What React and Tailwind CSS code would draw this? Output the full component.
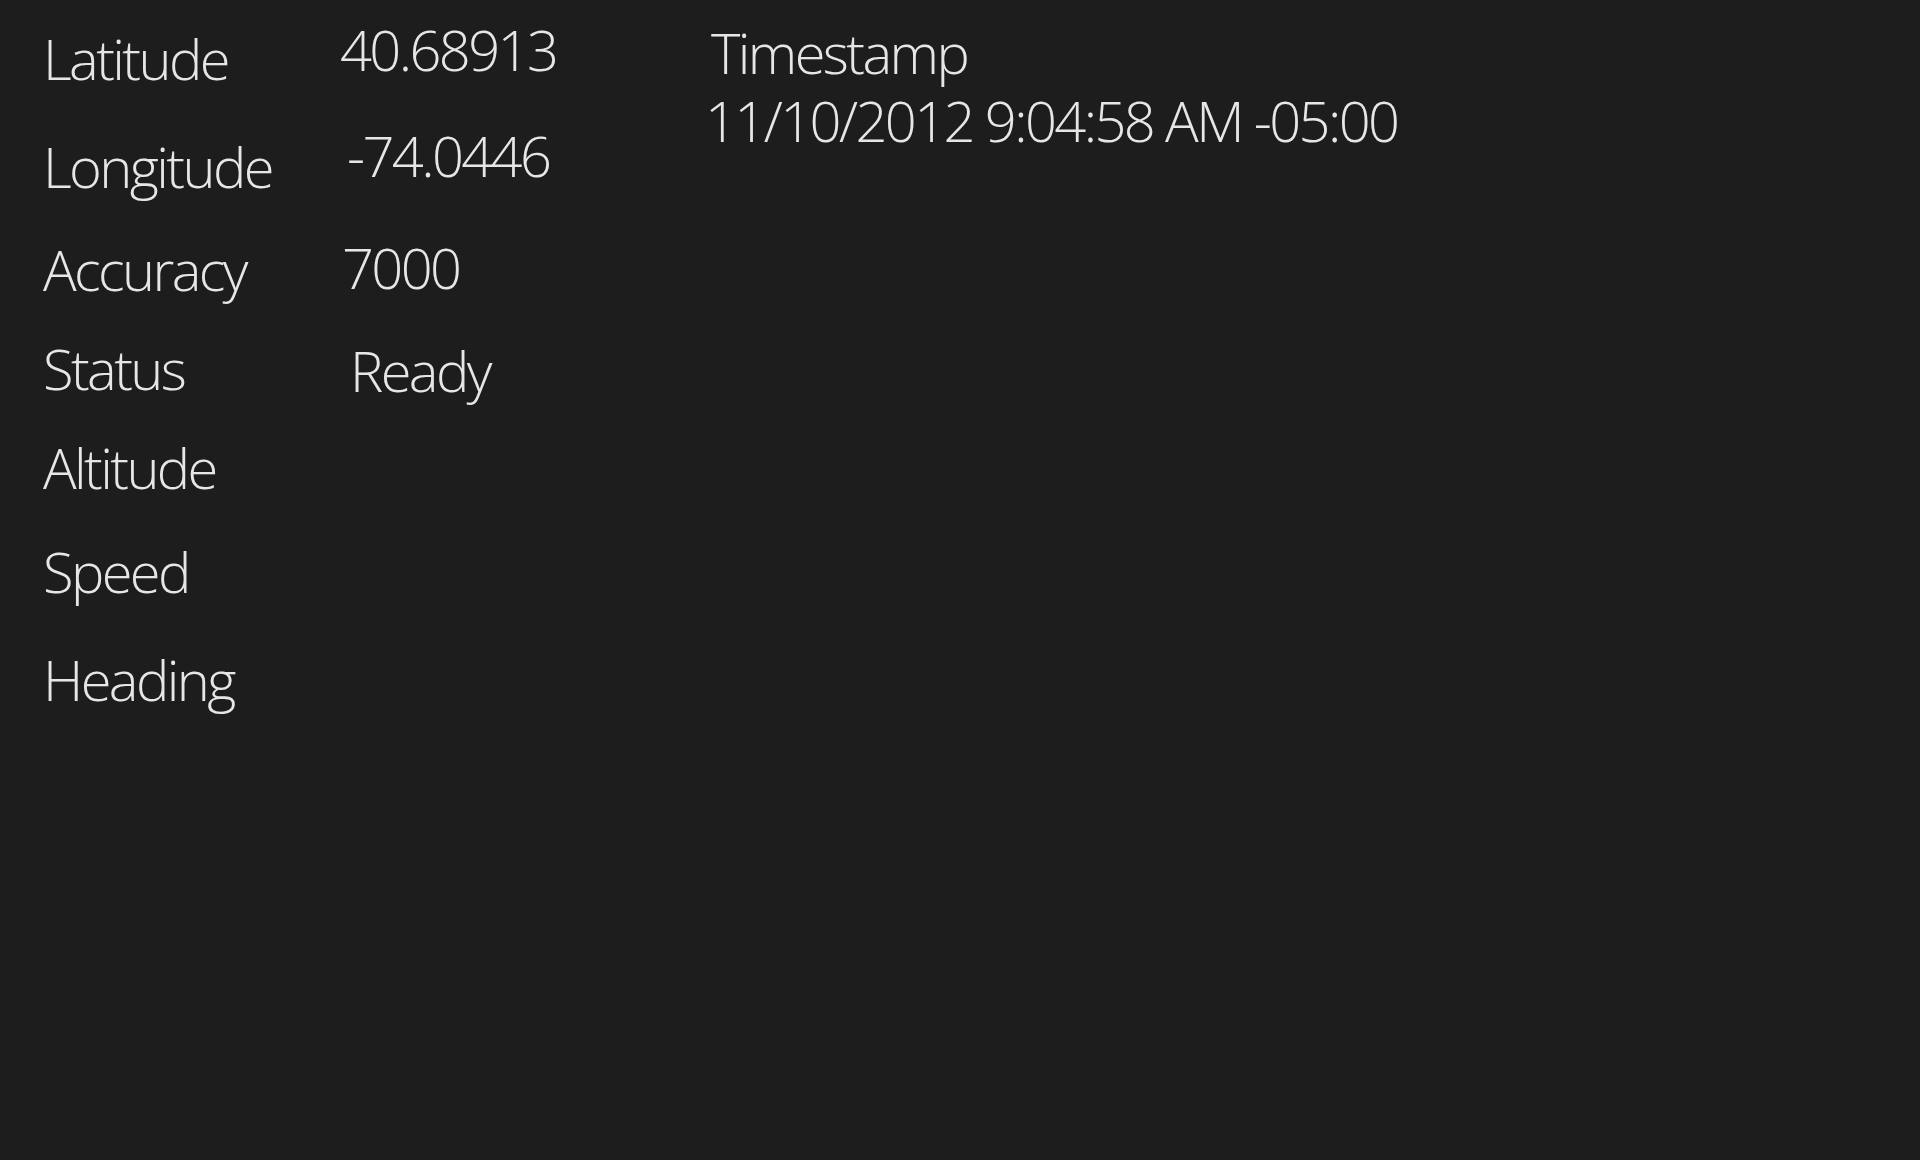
// Geolocation readout, dark tile
const labels = [
  { text: 'Latitude', mt: 'mt-[30px]' },
  { text: 'Longitude', mt: 'mt-[52px]' },
  { text: 'Accuracy', mt: 'mt-[47px]' },
  { text: 'Status', mt: 'mt-[43px]' },
  { text: 'Altitude', mt: 'mt-[43px]' },
  { text: 'Speed', mt: 'mt-[48px]' },
  { text: 'Heading', mt: 'mt-[52px]' },
];

const values = [
  { text: '40.68913', cls: 'mt-[21px] ml-0' },
  { text: '-74.0446', cls: 'mt-[50px] ml-[7px]' },
  { text: '7000', cls: 'mt-[56px] ml-[2px]' },
  { text: 'Ready', cls: 'mt-[47px] ml-[10px]' },
];

export default function App() {
  return (
    <div
      className="w-[1920px] h-[1160px] bg-[#1d1d1d] text-[#e6e6e6] font-light overflow-hidden"
      style={{ fontFamily: '"Open Sans", "Noto Sans", sans-serif' }}
    >
      <div className="flex text-[56px] leading-[56px] tracking-[-2.6px]">
        {/* labels */}
        <div className="flex flex-col w-[340px] pl-[43px]">
          {labels.map((l) => (
            <div key={l.text} className={l.mt}>
              {l.text}
            </div>
          ))}
        </div>

        {/* values */}
        <div className="flex flex-col w-[365px]">
          {values.map((v) => (
            <div key={v.text} className={v.cls}>
              {v.text}
            </div>
          ))}
        </div>

        {/* timestamp */}
        <div className="flex flex-col">
          <div className="mt-[24px] ml-[6px]">Timestamp</div>
          <div className="mt-[12px]">11/10/2012 9:04:58 AM -05:00</div>
        </div>
      </div>
    </div>
  );
}
